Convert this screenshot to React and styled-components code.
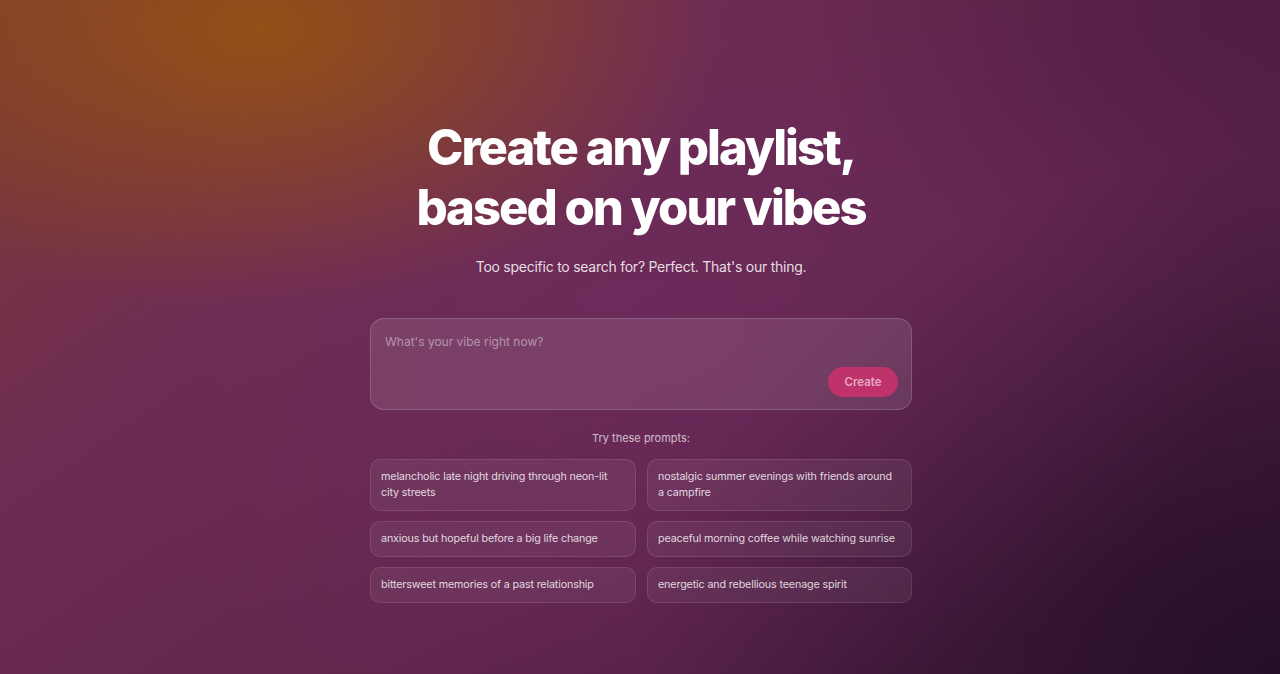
import React from 'react';
import styled, { createGlobalStyle } from 'styled-components';

const GlobalStyle = createGlobalStyle`
  * { box-sizing: border-box; }
  html, body { margin: 0; padding: 0; height: 100%; }
  body {
    font-family: Inter, "Noto Sans", sans-serif;
    background: #4a1d45;
  }
`;

const Page = styled.main`
  min-height: 674px;
  display: flex;
  flex-direction: column;
  align-items: center;
  padding-top: 118px;
  padding-left: 2px;
  color: #fff;
  background:
    radial-gradient(ellipse 460px 280px at 260px 30px, rgba(150, 80, 20, 0.95), rgba(150, 80, 20, 0) 100%),
    radial-gradient(ellipse 600px 400px at 640px 320px, rgba(112, 44, 98, 0.55), rgba(112, 44, 98, 0) 100%),
    radial-gradient(ellipse 500px 300px at 1280px 0px, rgba(70, 24, 64, 0.7), rgba(70, 24, 64, 0) 100%),
    radial-gradient(ellipse 650px 520px at 1280px 674px, rgba(36, 14, 38, 0.95), rgba(36, 14, 38, 0) 100%),
    linear-gradient(145deg, #7c3c32 0%, #6e2c52 30%, #62264f 60%, #40193e 100%);
`;

const Title = styled.h1`
  margin: 0;
  font-size: 49px;
  line-height: 60px;
  font-weight: 800;
  letter-spacing: -2px;
  text-align: center;
  color: #fff;
`;

const Subtitle = styled.p`
  margin: 19px 0 0;
  font-size: 14px;
  line-height: 20px;
  letter-spacing: -0.25px;
  color: rgba(255, 255, 255, 0.85);
`;

const InputBox = styled.div`
  margin-top: 41px;
  width: 542px;
  height: 92px;
  border-radius: 14px;
  border: 1px solid rgba(255, 255, 255, 0.16);
  background: rgba(255, 255, 255, 0.1);
  padding: 14px 13px 13px 14px;
  display: flex;
  flex-direction: column;
  justify-content: space-between;
`;

const Placeholder = styled.div`
  font-size: 12px;
  line-height: 18px;
  color: rgba(255, 255, 255, 0.45);
`;

const CreateButton = styled.button`
  align-self: flex-end;
  border: none;
  border-radius: 16px;
  height: 30px;
  width: 70px;
  padding: 0;
  margin-bottom: -1px;
  background: #c0326a;
  color: rgba(255, 255, 255, 0.6);
  font-family: inherit;
  font-size: 11.5px;
  font-weight: 600;
`;

const PromptsLabel = styled.div`
  margin-top: 20px;
  font-size: 11px;
  line-height: 16px;
  color: rgba(255, 255, 255, 0.7);
`;

const PromptGrid = styled.div`
  margin-top: 13px;
  width: 542px;
  display: grid;
  grid-template-columns: 266px 265px;
  column-gap: 11px;
  row-gap: 10px;
`;

const PromptCard = styled.div`
  border-radius: 10px;
  border: 1px solid rgba(255, 255, 255, 0.1);
  background: rgba(255, 255, 255, 0.06);
  padding: 9px 13px 9px 10px;
  font-size: 10.75px;
  line-height: 16px;
  letter-spacing: -0.15px;
  color: rgba(255, 255, 255, 0.82);
  display: flex;
  align-items: center;
`;

const prompts = [
  'melancholic late night driving through neon-lit city streets',
  'nostalgic summer evenings with friends around a campfire',
  'anxious but hopeful before a big life change',
  'peaceful morning coffee while watching sunrise',
  'bittersweet memories of a past relationship',
  'energetic and rebellious teenage spirit',
];

const App = () => {
  return (
    <>
      <GlobalStyle />
      <Page>
        <Title>
          Create any playlist,
          <br />
          based on your vibes
        </Title>
        <Subtitle>Too specific to search for? Perfect. That's our thing.</Subtitle>
        <InputBox>
          <Placeholder>What's your vibe right now?</Placeholder>
          <CreateButton>Create</CreateButton>
        </InputBox>
        <PromptsLabel>Try these prompts:</PromptsLabel>
        <PromptGrid>
          {prompts.map((p) => (
            <PromptCard key={p}>{p}</PromptCard>
          ))}
        </PromptGrid>
      </Page>
    </>
  );
};

export default App;
